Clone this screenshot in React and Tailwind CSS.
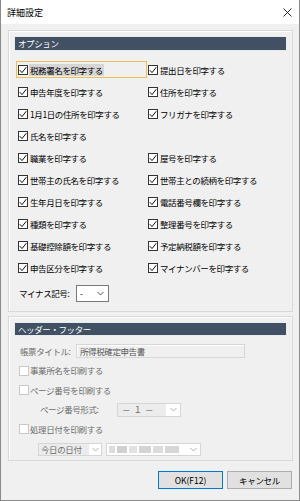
import React from "react";

const Check = ({ checked = true, disabled = false }) => (
  <span
    className={
      disabled
        ? "w-[10px] h-[10px] border border-[#c8c8c8] bg-white shrink-0 flex items-center justify-center"
        : "w-[10px] h-[10px] border border-[#333333] bg-white shrink-0 flex items-center justify-center"
    }
  >
    {checked && (
      <svg width="8" height="8" viewBox="0 0 8 8">
        <path d="M0.8 4.2 L3 6.6 L7.3 1.2" fill="none" stroke="#111" strokeWidth="1" />
      </svg>
    )}
  </span>
);

const Chevron = ({ color = "#444" }) => (
  <svg width="7" height="5" viewBox="0 0 7 5">
    <path d="M0.5 1 L3.5 4 L6.5 1" fill="none" stroke={color} strokeWidth="0.9" />
  </svg>
);

const Item = ({ label }) => (
  <div className="h-[22px] flex items-center pl-[4px] gap-[2px]">
    {label ? (
      <>
        <Check />
        <span className="whitespace-nowrap">{label}</span>
      </>
    ) : null}
  </div>
);

const rows = [
  ["申告年度を印字する", "住所を印字する"],
  ["1月1日の住所を印字する", "フリガナを印字する"],
  ["氏名を印字する", ""],
  ["職業を印字する", "屋号を印字する"],
  ["世帯主の氏名を印字する", "世帯主との続柄を印字する"],
  ["生年月日を印字する", "電話番号欄を印字する"],
  ["種類を印字する", "整理番号を印字する"],
  ["基礎控除額を印字する", "予定納税額を印字する"],
  ["申告区分を印字する", "マイナンバーを印字する"],
];

export default function App() {
  return (
    <div className="w-[300px] h-[501px] bg-[#f0f0f0] flex flex-col border-l border-r border-b border-[#8a8a8a] text-[8.5px] tracking-[-0.4px] leading-none text-black font-['Noto_Sans_CJK_JP','Noto_Sans',sans-serif] overflow-hidden">
      {/* title bar */}
      <div className="h-[24px] bg-white flex items-center justify-between pl-[6px] pr-[6px] shrink-0">
        <span className="text-[9px] tracking-normal">詳細設定</span>
        <svg width="9" height="9" viewBox="0 0 9 9" className="mr-[1px]">
          <path d="M0.5 0.5 L8.5 8.5 M8.5 0.5 L0.5 8.5" stroke="#111" strokeWidth="0.9" />
        </svg>
      </div>

      <div className="flex flex-col pl-[7px] pr-[6px]">
        {/* Group 1 */}
        <div className="mt-[6px] border border-[#d8d8d8] shadow-[inset_1px_1px_0_#ffffff] px-[5px] pt-[5px] pb-[9px]">
          <div className="h-[15px] bg-[#415163] border border-[#e8ecef] flex items-center pl-[3px] text-white">
            オプション
          </div>
          <div className="mt-[8px] grid grid-cols-[130px_1fr]">
            <div className="relative h-[22px] flex items-center pl-[4px] gap-[1px]">
              <Check />
              <span className="bg-[#d6d6d6] px-[1px] py-[2px] whitespace-nowrap">税務署名を印字する</span>
              <div className="absolute left-[2px] top-[2px] w-[131px] h-[17px] border border-[#f2c04a]" />
            </div>
            <Item label="提出日を印字する" />
            {rows.map(([a, b], i) => (
              <React.Fragment key={i}>
                <Item label={a} />
                <Item label={b} />
              </React.Fragment>
            ))}
          </div>
          <div className="mt-[6px] h-[17px] flex items-center">
            <span className="w-[62px] pl-[5px] whitespace-nowrap">マイナス記号:</span>
            <div className="w-[33px] h-[17px] bg-white border border-[#7a7a7a] flex items-center justify-between pl-[3px] pr-[4px]">
              <span>-</span>
              <Chevron />
            </div>
          </div>
        </div>

        {/* Group 2 */}
        <div className="mt-[4px] border border-[#d8d8d8] shadow-[inset_1px_1px_0_#ffffff] px-[5px] pt-[5px] pb-[1px] text-[#6d6d6d]">
          <div className="h-[14px] bg-[#415163] border border-[#e8ecef] flex items-center pl-[3px] text-white">
            ヘッダー・フッター
          </div>
          <div className="mt-[5px] h-[20px] flex items-center">
            <span className="w-[62px] pl-[6px] whitespace-nowrap">帳票タイトル:</span>
            <div className="w-[169px] h-[14px] border border-[#d6d6d6] bg-[#f0f0f0] shadow-[inset_1px_1px_0_#ffffff] flex items-center pl-[3px] text-[#555]">
              所得税確定申告書
            </div>
          </div>
          <div className="h-[19px] flex items-center pl-[5px] gap-[1px]">
            <Check checked={false} disabled />
            <span>事業所名を印刷する</span>
          </div>
          <div className="h-[20px] flex items-center pl-[5px] gap-[1px]">
            <Check checked={false} disabled />
            <span>ページ番号を印刷する</span>
          </div>
          <div className="h-[19px] flex items-center">
            <span className="w-[103px] pl-[26px] whitespace-nowrap">ページ番号形式:</span>
            <div className="w-[64px] h-[14px] border border-[#d6d6d6] bg-white flex items-center">
              <span className="h-full w-[48px] bg-[#ececec] flex items-center pl-[4px] tracking-[3px]">－１－</span>
              <span className="flex-1 flex justify-center"><Chevron color="#a8a8a8" /></span>
            </div>
          </div>
          <div className="h-[20px] flex items-center pl-[5px] gap-[1px]">
            <Check checked={false} disabled />
            <span>処理日付を印刷する</span>
          </div>
          <div className="h-[20px] flex items-center pl-[24px] gap-[4px]">
            <div className="w-[64px] h-[13px] border border-[#d6d6d6] bg-white flex items-center">
              <span className="h-full w-[50px] bg-[#ececec] flex items-center pl-[2px]">今日の日付</span>
              <span className="flex-1 flex justify-center"><Chevron color="#a8a8a8" /></span>
            </div>
            <div className="w-[95px] h-[13px] border border-[#d6d6d6] bg-white flex items-center pl-[2px] pr-[3px] gap-[2px]">
              <span className="h-[7px] w-[6px] bg-[#dcdcdc]" />
              <span className="h-[7px] w-[10px] bg-[#d0d0d0]" />
              <span className="h-[7px] w-[8px] bg-[#e2e2e2]" />
              <span className="h-[7px] w-[12px] bg-[#d4d4d4]" />
              <span className="h-[7px] w-[10px] bg-[#dcdcdc]" />
              <span className="h-[7px] w-[14px] bg-[#d6d6d6]" />
              <span className="flex-1" />
              <Chevron color="#a8a8a8" />
            </div>
          </div>
        </div>

        {/* Buttons */}
        <div className="mt-[10px] flex justify-end gap-[4px] pr-[1px]">
          <button className="w-[65px] h-[18px] bg-[#e1e1e1] border border-[#0078d7] text-[8.5px] tracking-normal text-black flex items-center justify-center">
            OK(F12)
          </button>
          <button className="w-[65px] h-[18px] bg-[#e1e1e1] border border-[#adadad] text-[8.5px] tracking-[-0.3px] text-black flex items-center justify-center">
            キャンセル
          </button>
        </div>
      </div>
    </div>
  );
}
